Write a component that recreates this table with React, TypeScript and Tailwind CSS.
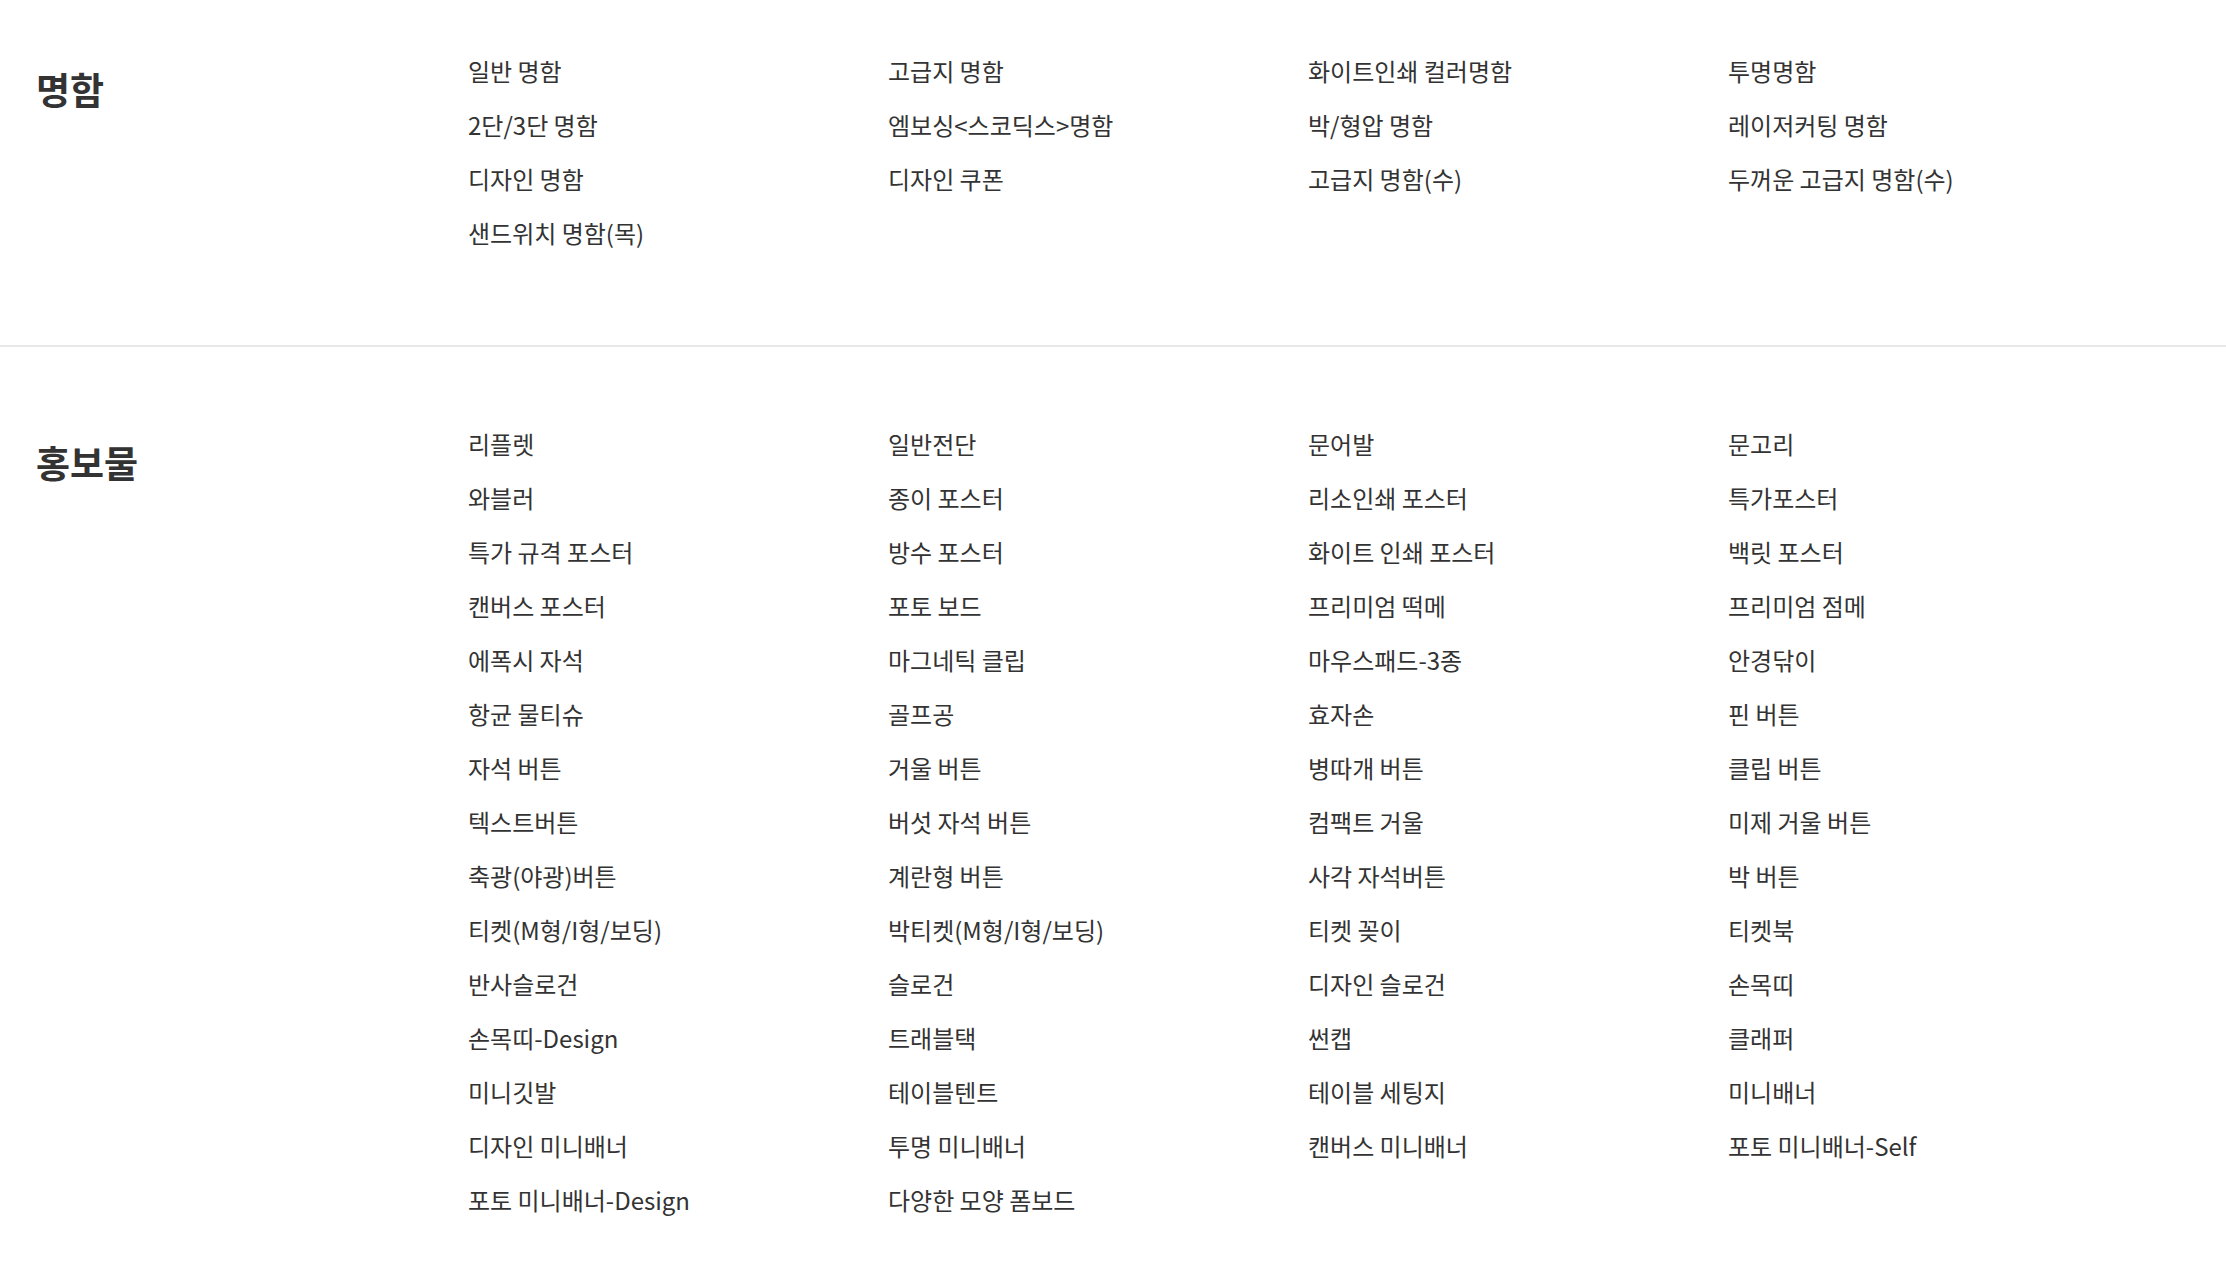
const sections = [
  {
    title: "명함",
    items: [
      "일반 명함",
      "고급지 명함",
      "화이트인쇄 컬러명함",
      "투명명함",
      "2단/3단 명함",
      "엠보싱<스코딕스>명함",
      "박/형압 명함",
      "레이저커팅 명함",
      "디자인 명함",
      "디자인 쿠폰",
      "고급지 명함(수)",
      "두꺼운 고급지 명함(수)",
      "샌드위치 명함(목)",
    ],
  },
  {
    title: "홍보물",
    items: [
      "리플렛", "일반전단", "문어발", "문고리",
      "와블러", "종이 포스터", "리소인쇄 포스터", "특가포스터",
      "특가 규격 포스터", "방수 포스터", "화이트 인쇄 포스터", "백릿 포스터",
      "캔버스 포스터", "포토 보드", "프리미엄 떡메", "프리미엄 점메",
      "에폭시 자석", "마그네틱 클립", "마우스패드-3종", "안경닦이",
      "항균 물티슈", "골프공", "효자손", "핀 버튼",
      "자석 버튼", "거울 버튼", "병따개 버튼", "클립 버튼",
      "텍스트버튼", "버섯 자석 버튼", "컴팩트 거울", "미제 거울 버튼",
      "축광(야광)버튼", "계란형 버튼", "사각 자석버튼", "박 버튼",
      "티켓(M형/I형/보딩)", "박티켓(M형/I형/보딩)", "티켓 꽂이", "티켓북",
      "반사슬로건", "슬로건", "디자인 슬로건", "손목띠",
      "손목띠-Design", "트래블택", "썬캡", "클래퍼",
      "미니깃발", "테이블텐트", "테이블 세팅지", "미니배너",
      "디자인 미니배너", "투명 미니배너", "캔버스 미니배너", "포토 미니배너-Self",
      "포토 미니배너-Design", "다양한 모양 폼보드",
    ],
  },
]

function CategorySection({ title, items, className }: { title: string; items: string[]; className: string }) {
  return (
    <section className={`flex ${className}`}>
      <h2 className="w-[468px] shrink-0 pl-[36px] mt-[22px] text-[37px] leading-[46px] font-bold text-[#333333]">
        {title}
      </h2>
      <ul className="grid grid-cols-[420px_420px_420px_420px] content-start">
        {items.map((item, i) => (
          <li key={i} className="h-[54px] leading-[54px] text-[24px] text-[#333333] whitespace-nowrap">
            {item}
          </li>
        ))}
      </ul>
    </section>
  )
}

export default function App() {
  return (
    <div className="w-full min-h-[1280px] bg-white font-['Noto_Sans_CJK_KR','Noto_Sans',sans-serif]">
      <CategorySection title={sections[0].title} items={sections[0].items} className="pt-[44px] pb-[85px]" />
      <div className="h-[2px] bg-[#e8e8e8]" />
      <CategorySection title={sections[1].title} items={sections[1].items} className="pt-[70px] pb-[52px]" />
    </div>
  )
}
